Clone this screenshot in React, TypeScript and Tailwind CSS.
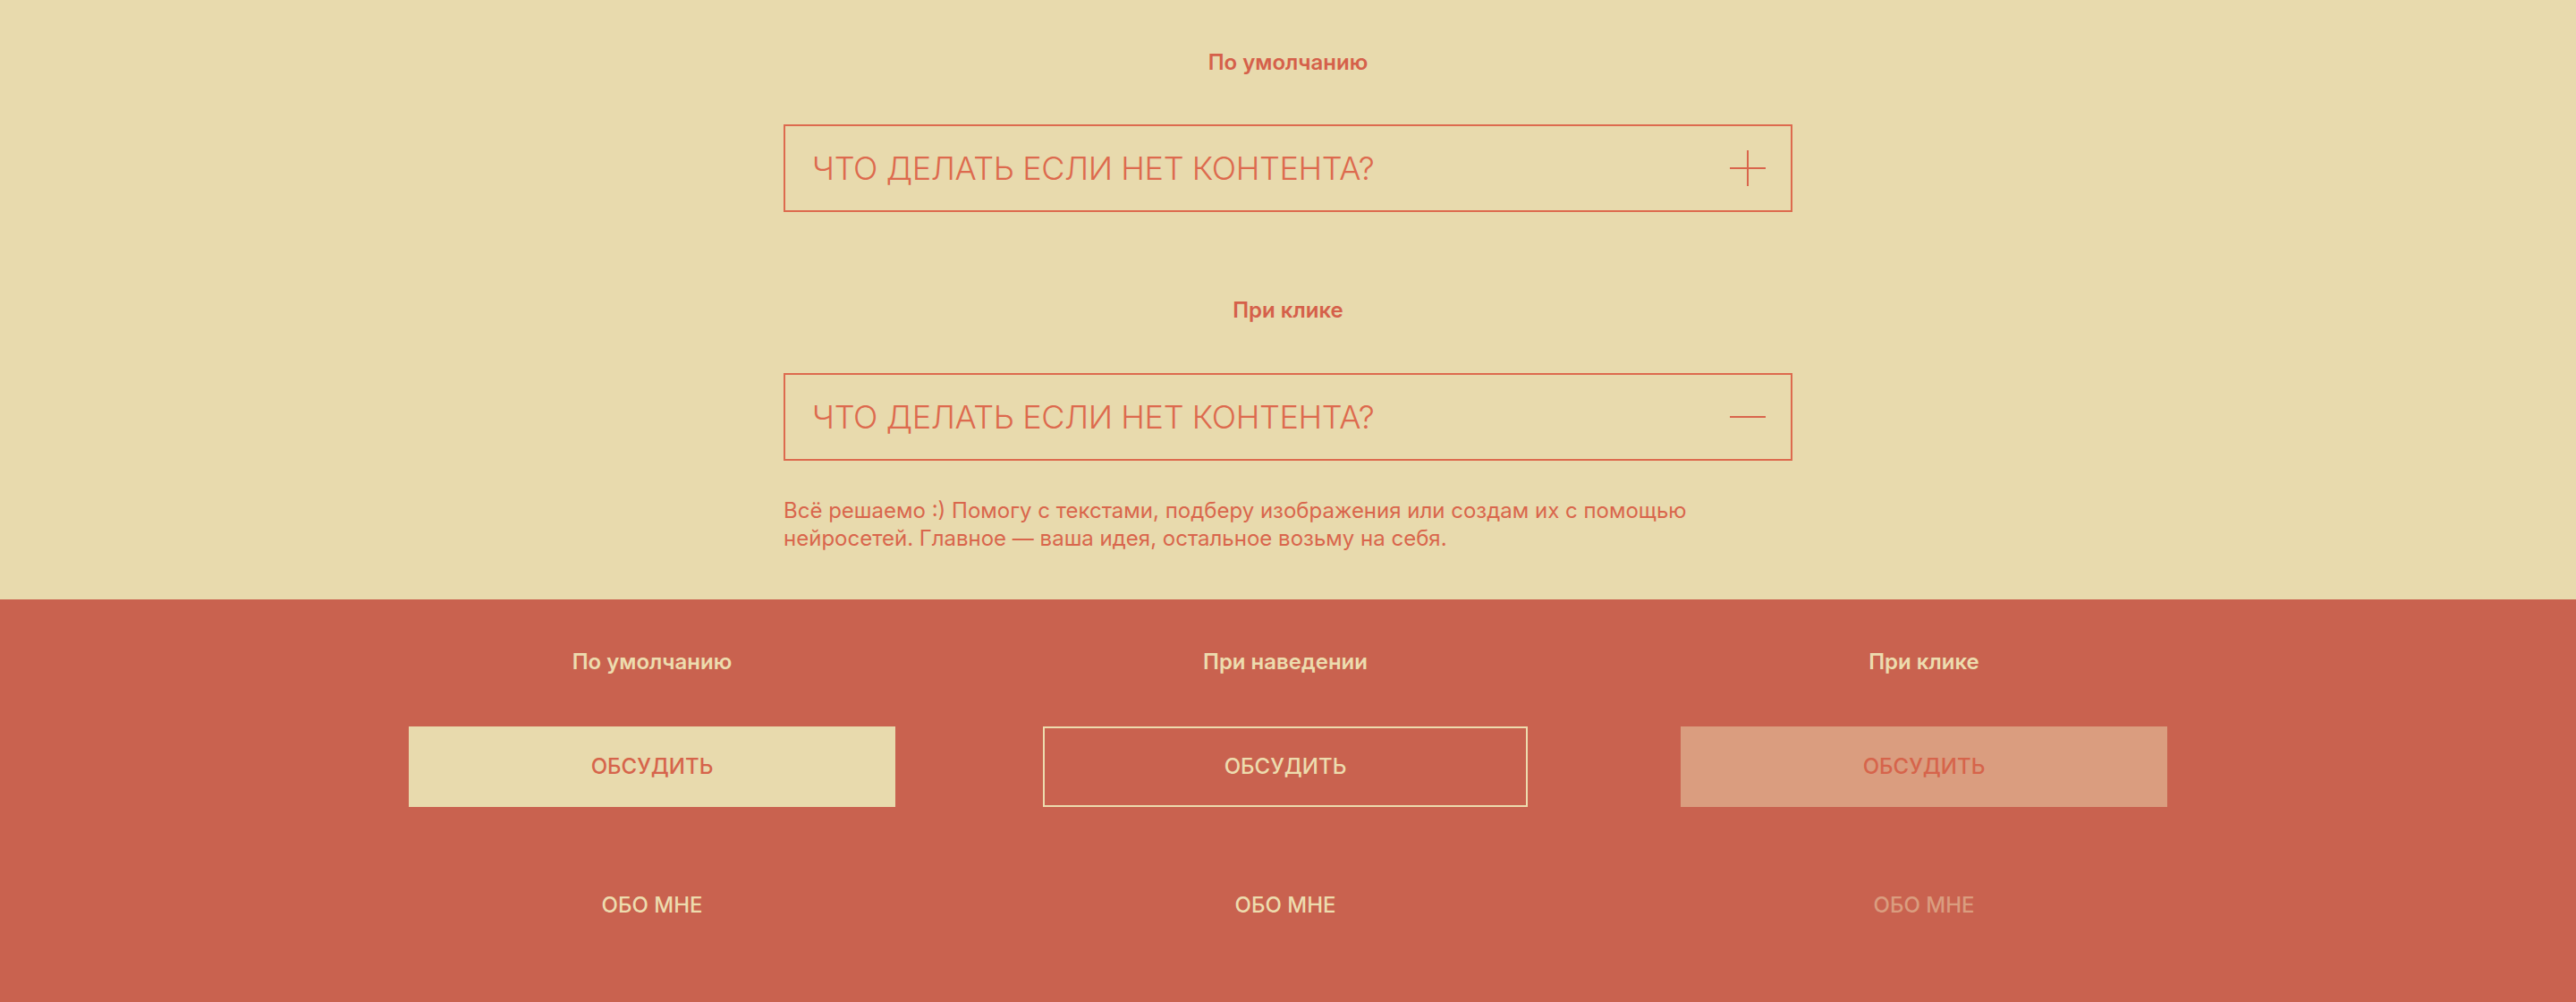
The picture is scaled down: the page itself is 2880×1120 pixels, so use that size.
import React from 'react';

const RED = '#d9654c';

const PlusIcon = () => (
  <svg width="40" height="40" viewBox="0 0 40 40" fill="none">
    <line x1="0" y1="20" x2="40" y2="20" stroke={RED} strokeWidth="2" />
    <line x1="20" y1="0" x2="20" y2="40" stroke={RED} strokeWidth="2" />
  </svg>
);

const MinusIcon = () => (
  <svg width="40" height="40" viewBox="0 0 40 40" fill="none">
    <line x1="0" y1="20" x2="40" y2="20" stroke={RED} strokeWidth="2" />
  </svg>
);

const AccordionHead = ({ open }: { open: boolean }) => (
  <div className="flex h-[98px] w-full items-center justify-between border-2 border-[#dd6a4e] pl-[30px] pr-7">
    <span className="text-[36px] font-light leading-none tracking-[-0.4px] text-[#dd6a4e]">
      ЧТО ДЕЛАТЬ ЕСЛИ НЕТ КОНТЕНТА?
    </span>
    {open ? <MinusIcon /> : <PlusIcon />}
  </div>
);

const StateLabel = ({ children, light }: { children: React.ReactNode; light?: boolean }) => (
  <div
    className={
      light
        ? 'text-center text-[24px] font-semibold leading-[28px] text-[#eddcae]'
        : 'text-center text-[24px] font-semibold leading-[28px] text-[#d5604a]'
    }
  >
    {children}
  </div>
);

export default function App() {
  return (
    <div className="min-h-screen w-full font-['Inter','Noto_Sans',sans-serif]">
      <section className="flex flex-col items-center bg-[#e8daad] pt-[56px] pb-[53px]">
        <div className="flex w-[1128px] flex-col">
          <StateLabel>По умолчанию</StateLabel>
          <div className="mt-[55px]">
            <AccordionHead open={false} />
          </div>
          <div className="mt-[96px]">
            <StateLabel>При клике</StateLabel>
          </div>
          <div className="mt-[56px]">
            <AccordionHead open={true} />
          </div>
          <p className="mt-[40px] max-w-[1060px] text-[24px] leading-[31px] text-[#d9664c]">
            Всё решаемо :) Помогу с текстами, подберу изображения или создам их с помощью нейросетей. Главное — ваша
            идея, остальное возьму на себя.
          </p>
        </div>
      </section>

      <section className="flex h-[450px] justify-center bg-[#c9624f] pt-[56px]">
        <div className="flex">
          <div className="flex w-[544px] flex-col items-center">
            <StateLabel light>По умолчанию</StateLabel>
            <button className="mt-[58px] flex h-[90px] w-full items-center justify-center bg-[#e8daad] text-[24px] font-medium text-[#d6644b]">
              ОБСУДИТЬ
            </button>
            <a className="mt-[96px] text-[24px] font-medium leading-[28px] text-[#eddcae]">ОБО МНЕ</a>
          </div>
          <div className="ml-[165px] flex w-[542px] flex-col items-center">
            <StateLabel light>При наведении</StateLabel>
            <button className="mt-[58px] flex h-[90px] w-full items-center justify-center border-2 border-[#eddcae] text-[24px] font-medium text-[#eddcae]">
              ОБСУДИТЬ
            </button>
            <a className="mt-[96px] text-[24px] font-medium leading-[28px] text-[#eddcae]">ОБО МНЕ</a>
          </div>
          <div className="ml-[171px] flex w-[544px] flex-col items-center">
            <StateLabel light>При клике</StateLabel>
            <button className="mt-[58px] flex h-[90px] w-full items-center justify-center bg-[#da9d7f] text-[24px] font-medium text-[#d6644b]">
              ОБСУДИТЬ
            </button>
            <a className="mt-[96px] text-[24px] font-medium leading-[28px] text-[#da9d7f]">ОБО МНЕ</a>
          </div>
        </div>
      </section>
    </div>
  );
}
